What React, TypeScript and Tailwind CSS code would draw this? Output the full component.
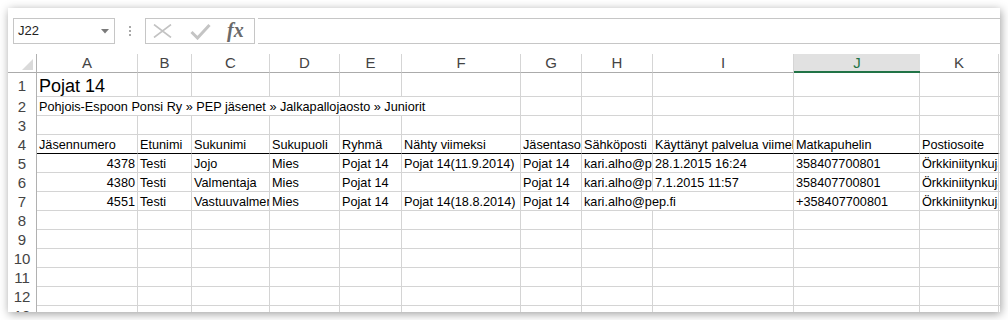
import React from 'react'

type Cell = { w: string; t?: string; r?: boolean }

const COLS = [
  { k: 'A', w: 'w-[101px]' },
  { k: 'B', w: 'w-[54px]' },
  { k: 'C', w: 'w-[78px]' },
  { k: 'D', w: 'w-[70px]' },
  { k: 'E', w: 'w-[62px]' },
  { k: 'F', w: 'w-[119px]' },
  { k: 'G', w: 'w-[61px]' },
  { k: 'H', w: 'w-[71px]' },
  { k: 'I', w: 'w-[141px]' },
  { k: 'J', w: 'w-[126px]' },
  { k: 'K', w: 'w-[79px]' },
  { k: 'L', w: 'w-[80px]' },
]

// plain row from values; only the member number (column A) is a real number
const cells = (vals: string[]): Cell[] =>
  COLS.map((c, i) => ({ w: c.w, t: vals[i], r: i === 0 && /^\d+$/.test(vals[i] ?? '') }))

const rows: { n: number; cells: Cell[]; tall?: boolean; line?: boolean }[] = [
  { n: 1, cells: cells(['Pojat 14']), tall: true },
  {
    n: 2,
    cells: [
      { w: 'w-[484px]', t: 'Pohjois-Espoon Ponsi Ry » PEP jäsenet » Jalkapallojaosto » Juniorit' },
      ...COLS.slice(6).map((c) => ({ w: c.w })),
    ],
  },
  { n: 3, cells: cells([]) },
  {
    n: 4,
    line: true,
    cells: cells([
      'Jäsennumero',
      'Etunimi',
      'Sukunimi',
      'Sukupuoli',
      'Ryhmä',
      'Nähty viimeksi',
      'Jäsentaso',
      'Sähköposti',
      'Käyttänyt palvelua viimeksi',
      'Matkapuhelin',
      'Postiosoite',
    ]),
  },
  {
    n: 5,
    cells: cells([
      '4378',
      'Testi',
      'Jojo',
      'Mies',
      'Pojat 14',
      'Pojat 14(11.9.2014)',
      'Pojat 14',
      'kari.alho@pep.fi',
      '28.1.2015 16:24',
      '358407700801',
      'Örkkiniitynkuja 5',
    ]),
  },
  {
    n: 6,
    cells: cells([
      '4380',
      'Testi',
      'Valmentaja',
      'Mies',
      'Pojat 14',
      '',
      'Pojat 14',
      'kari.alho@pep.fi',
      '7.1.2015 11:57',
      '358407700801',
      'Örkkiniitynkuja 5',
    ]),
  },
  {
    n: 7,
    cells: [
      ...cells(['4551', 'Testi', 'Vastuuvalmentaja', 'Mies', 'Pojat 14', 'Pojat 14(18.8.2014)', 'Pojat 14']).slice(0, 7),
      { w: 'w-[212px]', t: 'kari.alho@pep.fi' },
      { w: COLS[9].w, t: '+358407700801' },
      { w: COLS[10].w, t: 'Örkkiniitynkuja 5' },
      { w: COLS[11].w },
    ],
  },
  { n: 8, cells: cells([]) },
  { n: 9, cells: cells([]) },
  { n: 10, cells: cells([]) },
  { n: 11, cells: cells([]) },
  { n: 12, cells: cells([]) },
  { n: 13, cells: cells([]) },
]

const FormulaBar = () => (
  <div className="flex items-start h-[46px] pt-[10px] pl-[5px] shrink-0">
    {/* Name box */}
    <div className="w-[102px] h-[26px] shrink-0 border border-[#c6c6c6] flex items-center justify-between pl-[4px] pr-[5px]">
      <span className="text-[13px] text-[#222]">J22</span>
      <svg width="8" height="5" viewBox="0 0 8 5">
        <polygon points="0,0 8,0 4,4.5" fill="#7a7a7a" />
      </svg>
    </div>

    <div className="w-[30px] h-[26px] shrink-0 flex flex-col items-center justify-center gap-[2px]">
      <div className="w-[2px] h-[2px] bg-[#a8a8a8]" />
      <div className="w-[2px] h-[2px] bg-[#a8a8a8]" />
      <div className="w-[2px] h-[2px] bg-[#a8a8a8]" />
    </div>

    {/* cancel / enter / fx */}
    <div className="w-[110px] h-[26px] shrink-0 border border-[#c6c6c6] flex items-center pl-[7px]">
      <svg width="19" height="14" viewBox="0 0 19 14">
        <path d="M1 0.5 L18 13.5 M18 0.5 L1 13.5" stroke="#c2c2c2" strokeWidth="1.6" fill="none" />
      </svg>
      <svg width="21" height="17" viewBox="0 0 21 17" className="ml-[18px]">
        <path d="M1.5 9 L7.5 15 L19.5 2" stroke="#c4c4c4" strokeWidth="3" fill="none" />
      </svg>
      <span className="ml-[16px] font-['Liberation_Serif',serif] italic font-bold text-[20px] leading-none text-[#6a6a6a] pb-[2px]">
        fx
      </span>
    </div>

    <div className="ml-[3px] flex-1 h-[26px] border-y border-[#c6c6c6]" />
  </div>
)

const ColumnHeader = () => (
  <div className="flex h-[19px] shrink-0">
    <div className="w-[29px] shrink-0 border-r border-b border-r-[#b1b1b1] border-b-[#ababab] flex items-end justify-end pr-[3px] pb-[2px]">
      <svg width="11" height="11" viewBox="0 0 11 11">
        <polygon points="11,0 11,11 0,11" fill="#dadada" />
      </svg>
    </div>
    {COLS.map((c) =>
      c.k === 'J' ? (
        <div
          key={c.k}
          className={`${c.w} shrink-0 bg-[#e1e1e1] border-b-2 border-b-[#217346] flex items-center justify-center pt-[2px] text-[15px] text-[#217346]`}
        >
          {c.k}
        </div>
      ) : (
        <div
          key={c.k}
          className={`${c.w} shrink-0 border-r border-b border-r-[#d5d5d5] border-b-[#ababab] flex items-center justify-center text-[15px] text-[#444]`}
        >
          {c.k}
        </div>
      )
    )}
  </div>
)

export default function App() {
  return (
    <div className="w-[1008px] h-[320px] bg-white p-[8px] font-['Liberation_Sans',Arial,sans-serif]">
      <div className="w-[992px] h-[304px] bg-white overflow-hidden flex flex-col shadow-[1px_2px_9px_rgba(0,0,0,0.38)]">
        <FormulaBar />
        <ColumnHeader />

        {rows.map((row) => (
          <div key={row.n} className={`flex shrink-0 ${row.tall ? 'h-[24px]' : 'h-[19px]'}`}>
            <div className="w-[29px] shrink-0 border-r border-r-[#b1b1b1] flex items-center justify-center pt-[2px] text-[15px] text-[#444]">
              {row.n}
            </div>
            {row.cells.map((c, i) => (
              <div
                key={i}
                className={`${c.w} shrink-0 border-r border-b border-r-[#d4d4d4] ${
                  row.line && i < 11 ? 'border-b-black' : 'border-b-[#d4d4d4]'
                } flex items-end overflow-hidden whitespace-nowrap ${c.r ? 'justify-end pr-[2px]' : 'pl-[2px]'}`}
              >
                <span className={`text-black ${row.tall ? 'text-[18px] leading-[20px]' : 'text-[12.7px] leading-[15px]'}`}>
                  {c.t}
                </span>
              </div>
            ))}
          </div>
        ))}
      </div>
    </div>
  )
}
